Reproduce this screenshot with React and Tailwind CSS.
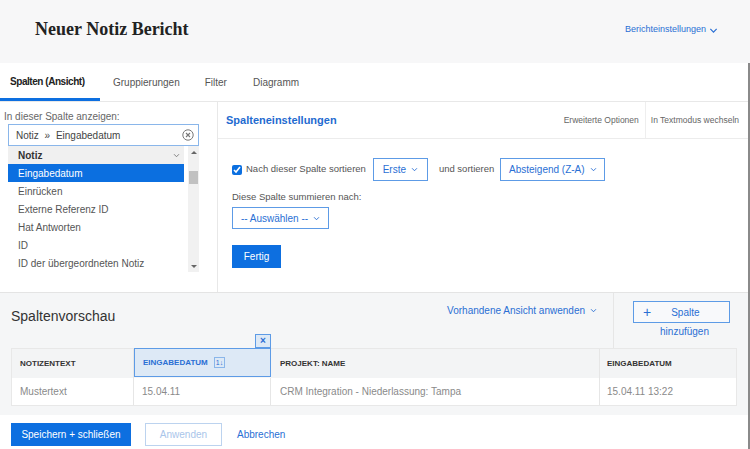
import React from "react";

const Chevron = ({ className = "", size = 7 }) => (
  <svg width={size} height={size} viewBox="0 0 10 10" className={className} fill="none">
    <polyline points="1.5,3.2 5,6.8 8.5,3.2" stroke="currentColor" strokeWidth="1.3" />
  </svg>
);

const ClearIcon = () => (
  <svg width="12" height="12" viewBox="0 0 12 12" fill="none">
    <circle cx="6" cy="6" r="5.2" stroke="#777" strokeWidth="1" />
    <path d="M4 4 L8 8 M8 4 L4 8" stroke="#777" strokeWidth="1.1" />
  </svg>
);

const listItems = [
  "Eingabedatum",
  "Einrücken",
  "Externe Referenz ID",
  "Hat Antworten",
  "ID",
  "ID der übergeordneten Notiz",
];

export default function App() {
  return (
    <div className="w-[750px] h-[449px] overflow-hidden flex flex-col bg-white font-['Liberation_Sans',Arial,sans-serif]">
      {/* header */}
      <header className="h-[63px] shrink-0 bg-[#f7f7f8] flex items-center justify-between pl-[35px] pr-[32px] pb-[5px]">
        <h1 className="font-['Liberation_Serif','Times_New_Roman',serif] text-[18px] font-bold text-[#222]">
          Neuer Notiz Bericht
        </h1>
        <div className="flex items-center gap-[3px] text-[9px] text-[#2a6fd4] pt-[2px]">
          Berichteinstellungen
          <Chevron size={9} />
        </div>
      </header>

      <div className="flex-1 flex flex-col border-r-2 border-[#8a8a8a]">
        {/* tabs */}
        <nav className="h-[39px] shrink-0 flex border-b border-[#e8e8e8] text-[10px]">
          <div className="w-[100px] pl-[10px] flex items-center border-b-[3px] border-[#0d6fe0] pt-[2px] font-bold text-[#222] tracking-[-0.45px]">
            Spalten (Ansicht)
          </div>
          <div className="ml-[13px] flex items-center text-[#555]">Gruppierungen</div>
          <div className="ml-[25px] flex items-center text-[#555]">Filter</div>
          <div className="ml-[26px] flex items-center text-[#555]">Diagramm</div>
        </nav>

        {/* main */}
        <div className="h-[190px] shrink-0 flex">
          <div className="w-[218px] border-r border-[#e8e8e8] pt-[9px]">
            <div className="pl-[4px] text-[10px] leading-[12px] text-[#666]">In dieser Spalte anzeigen:</div>
            <div className="mt-[1px] ml-[8px] w-[191px] h-[22px] border border-[#8ab6ea] flex items-center justify-between pl-[7px] pr-[4px] text-[10px] text-[#444]">
              <span>
                Notiz <span className="mx-[3px]">»</span> Eingabedatum
              </span>
              <ClearIcon />
            </div>
            <div className="ml-[8px] w-[191px] h-[126px] flex">
              <div className="w-[176px] flex flex-col">
                <div className="h-[18.5px] bg-[#f0f0f0] flex items-center justify-between pl-[10px] pr-[4px] text-[10px] font-bold text-[#333]">
                  Notiz
                  <Chevron size={7} className="text-[#777]" />
                </div>
                {listItems.map((item, i) => (
                  <div
                    key={item}
                    className={
                      i === 0
                        ? "h-[18.4px] pl-[10px] flex items-center text-[10px] bg-[#0b6fe0] text-white whitespace-nowrap overflow-hidden"
                        : "h-[18.4px] pl-[10px] flex items-center text-[10px] text-[#555] whitespace-nowrap overflow-hidden"
                    }
                  >
                    {item}
                  </div>
                ))}
              </div>
              <div className="ml-auto w-[11px] bg-[#f1f1f1] flex flex-col items-center pt-[5px] pb-[4px]">
                <div className="w-0 h-0 border-x-[3px] border-x-transparent border-b-[3px] border-b-[#666]" />
                <div className="mt-[17px] w-[9px] h-[13px] bg-[#c1c1c1]" />
                <div className="flex-1" />
                <div className="w-0 h-0 border-x-[3px] border-x-transparent border-t-[3px] border-t-[#666]" />
              </div>
            </div>
          </div>

          <div className="flex-1 flex flex-col">
            <div className="h-[37px] border-b border-[#ececec] flex items-center">
              <div className="pl-[8px] text-[11px] font-bold text-[#1f6bd0]">Spalteneinstellungen</div>
              <div className="ml-auto pr-[6px] text-[8.5px] text-[#666]">Erweiterte Optionen</div>
              <div className="w-px self-stretch bg-[#eeeeee]" />
              <div className="pl-[5px] pr-[9px] text-[8.5px] text-[#666]">In Textmodus wechseln</div>
            </div>
            <div className="pl-[14px] pt-[19px] text-[9.5px] text-[#555]">
              <div className="h-[23px] flex items-center">
                <input type="checkbox" defaultChecked className="w-[10px] h-[10px] m-0 mr-[4px] accent-[#0b6fe0]" />
                <span>Nach dieser Spalte sortieren</span>
                <div className="ml-[7px] w-[55px] h-[23px] border border-[#5d9be6] flex items-center justify-center gap-[5px] text-[10px] text-[#2a6fd4]">
                  Erste <Chevron size={7} />
                </div>
                <span className="ml-[11px]">und sortieren</span>
                <div className="ml-[6px] w-[105px] h-[23px] border border-[#5d9be6] flex items-center justify-center gap-[5px] text-[10px] text-[#2a6fd4]">
                  Absteigend (Z-A) <Chevron size={7} />
                </div>
              </div>
              <div className="mt-[10px] leading-[12px]">Diese Spalte summieren nach:</div>
              <div className="mt-[4px] w-[97px] h-[22px] border border-[#5d9be6] flex items-center justify-center gap-[5px] text-[10px] text-[#2a6fd4]">
                -- Auswählen -- <Chevron size={7} />
              </div>
              <button className="mt-[16px] w-[49px] h-[23px] bg-[#0d6fe0] text-white text-[10px] flex items-center justify-center">
                Fertig
              </button>
            </div>
          </div>
        </div>

        {/* preview */}
        <div className="h-[123px] shrink-0 bg-[#f5f6f7] border-t border-[#e4e4e4] px-[11px]">
          <div className="h-[55px] flex">
            <div className="mt-[15px] text-[14px] leading-[16px] text-[#333]">Spaltenvorschau</div>
            <div className="ml-auto mt-[11px] h-[12px] flex items-center gap-[5px] text-[10px] text-[#2a6fd4]">
              Vorhandene Ansicht anwenden <Chevron size={7} />
            </div>
            <div className="ml-[16px] w-px bg-[#e6e6e6]" />
            <div className="ml-[19px] mr-[7px] flex flex-col items-center">
              <div className="mt-[8px] w-[97px] h-[22px] border border-[#5d9be6] bg-[#f8f9fb] flex items-center text-[10px] text-[#2a6fd4]">
                <span className="pl-[9px] text-[14px] leading-none">+</span>
                <span className="ml-[20px]">Spalte</span>
              </div>
              <div className="mt-[3px] leading-[12px] text-[10px] text-[#2a6fd4] pl-[6px]">hinzufügen</div>
            </div>
          </div>
          <div className="grid grid-cols-[122px_137px_329px_136px] border border-[#e8e8e8]">
            <div className="h-[29px] bg-[#f3f4f5] flex items-center pl-[8px] text-[8px] font-bold text-[#333] border-r border-[#e6e6e6]">
              NOTIZENTEXT
            </div>
            <div className="relative h-[29px] bg-[#dde9f6] border border-[#5d9be6] flex items-center pl-[8px] gap-[6px] text-[8px] font-bold text-[#2a6fd4] -mt-px">
              EINGABEDATUM
              <span className="border border-[#8ab6ea] px-[1px] text-[7px] leading-[9px] font-normal">1↓</span>
              <div className="absolute -top-[15px] -right-px w-[16px] h-[14px] bg-[#dde9f6] border border-[#5d9be6] flex items-center justify-center text-[10px] leading-none text-[#2a6fd4]">
                ×
              </div>
            </div>
            <div className="h-[29px] bg-[#f3f4f5] flex items-center pl-[9px] text-[8px] font-bold text-[#333] border-r border-[#e6e6e6]">
              PROJEKT: NAME
            </div>
            <div className="h-[29px] bg-[#f3f4f5] flex items-center pl-[7px] text-[8px] font-bold text-[#333]">
              EINGABEDATUM
            </div>
            <div className="h-[27px] bg-white flex items-center pl-[8px] text-[10px] text-[#8a8a8a] border-r border-[#e6e6e6]">
              Mustertext
            </div>
            <div className="h-[27px] bg-white flex items-center pl-[8px] text-[10px] text-[#8a8a8a] border-r border-[#e6e6e6]">
              15.04.11
            </div>
            <div className="h-[27px] bg-white flex items-center pl-[9px] text-[10px] text-[#8a8a8a] border-r border-[#e6e6e6]">
              CRM Integration - Niederlassung: Tampa
            </div>
            <div className="h-[27px] bg-white flex items-center pl-[7px] text-[10px] text-[#8a8a8a]">
              15.04.11 13:22
            </div>
          </div>
        </div>

        {/* footer */}
        <div className="flex-1 flex items-start pt-[8px] pl-[11px] text-[10px]">
          <button className="w-[120px] h-[23px] bg-[#0d6fe0] text-white flex items-center justify-center">
            Speichern + schließen
          </button>
          <button className="ml-[14px] w-[77px] h-[23px] border border-[#bcd3ef] text-[#a9c5ea] flex items-center justify-center">
            Anwenden
          </button>
          <span className="ml-[15px] h-[23px] flex items-center text-[#2a6fd4]">Abbrechen</span>
        </div>
      </div>
    </div>
  );
}
